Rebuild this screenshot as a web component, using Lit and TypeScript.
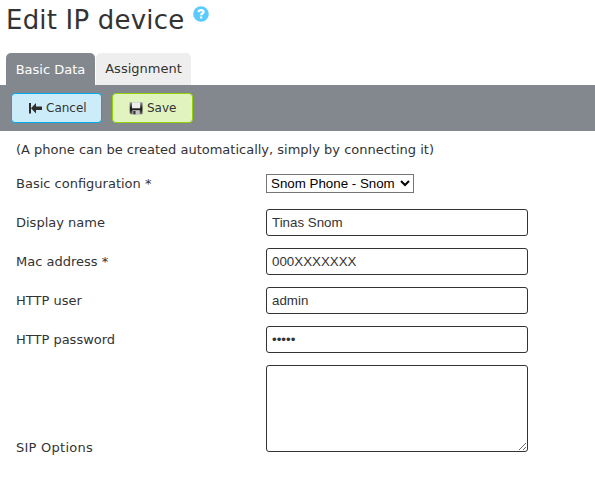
import { LitElement, html, css, svg } from "lit";
import { customElement } from "lit/decorators.js";

const helpIcon = svg`<svg class="help" viewBox="0 0 16 16"><circle cx="8" cy="8" r="7.8" fill="#5bcbff"/><path d="M5.6 6.1C5.7 4.7 6.6 4.1 8 4.1s2.5.7 2.5 1.9C10.5 7.5 8.1 7.4 8.1 9.2M8.1 10.4v2.2" fill="none" stroke="#fff" stroke-width="2.3"/></svg>`;

const backIcon = svg`<svg class="icon" viewBox="0 0 14 14"><path d="M1 2h2v10.5H1zM3 7.2L8 2v3.4h6v3.7H8v3.4z" fill="#2d2d2d"/></svg>`;

const saveIcon = svg`<svg class="icon" viewBox="0 0 14 14"><defs><linearGradient id="g" x1="0" y1="0" x2="0" y2="1"><stop offset="0" stop-color="#999"/><stop offset=".45" stop-color="#1c1c1c"/><stop offset=".65" stop-color="#222"/><stop offset="1" stop-color="#777"/></linearGradient></defs><path d="M.7 1.3h12.8v12H1.7l-1-1z" fill="url(#g)"/><path d="M3 1.3h8.2v6H3z" fill="#ececec"/><path d="M3.4 9.2h7.4v4.1H3.4z" fill="#c5c5c5"/><path d="M4.3 10h2.2v3.3H4.3z" fill="#333"/></svg>`;

@customElement("app-root")
export class AppRoot extends LitElement {
  static styles = css`
    :host {
      display: block;
      height: 480px;
      background: #fff;
      color: #333;
      font: 13px/16px "DejaVu Sans", Verdana, sans-serif;
      overflow: hidden;
    }
    * { box-sizing: border-box; }
    header { display: flex; height: 53px; padding: 3px 0 0 6px; gap: 9px; }
    h1 { margin: 0; padding-top: 1px; font-size: 26px; line-height: 32px; font-weight: 400; width: 178px; white-space: nowrap; letter-spacing: 0.2px; }
    .help { width: 16px; height: 16px; margin-top: 3px; flex: none; }
    .tabs { display: flex; gap: 1px; padding-left: 6px; height: 32px; }
    .tab { height: 32px; line-height: 32px; border-radius: 5px 5px 0 0; text-align: center; background: #eee; width: 95px; white-space: nowrap; }
    .tab.active { background: #83888e; color: #fff; width: 89px; padding-top: 1px; }
    .bar { display: flex; gap: 10px; background: #83888e; height: 46px; padding: 8px 0 0 11px; }
    .btn { display: flex; align-items: center; justify-content: flex-start; gap: 4px; height: 30px; padding: 0 0 0 16px; border: 1px solid #00a8f0; border-radius: 4px; background: #cdecfa; color: #333; font: inherit; font-size: 12px; width: 91px; white-space: nowrap; }
    .btn.save { border-color: #92d400; background: #e1f3bf; width: 81px; }
    .icon { width: 14px; height: 14px; flex: none; }
    .form { padding: 11px 0 0 16px; }
    .note { height: 22px; white-space: nowrap; }
    .row { display: grid; grid-template-columns: 250px 262px; align-items: center; height: 39px; }
    .row.tall { height: 99px; padding-top: 6px; align-items: start; }
    .row.tall .label { padding-top: 75px; letter-spacing: 0.25px; }
    select { width: 148px; height: 19px; margin: 0; font: 13.333px "Liberation Sans", Arial, sans-serif; color: #000; background: #fff; border: 1px solid #767676; border-radius: 0; padding: 0; }
    input, textarea { display: block; width: 262px; height: 27px; border: 1px solid #333; border-radius: 3px; padding: 0 5px; margin: 0; background: #fff; color: #333; font: 13.333px "Liberation Sans", Arial, sans-serif; }
    textarea { height: 87px; resize: both; }
  `;

  private row(label: string, value: string, type = "text") {
    return html`<label class="row"><span class="label">${label}</span><input type=${type} .value=${value} /></label>`;
  }

  render() {
    return html`
      <header><h1>Edit IP device</h1>${helpIcon}</header>
      <nav class="tabs">
        <div class="tab active">Basic Data</div>
        <div class="tab">Assignment</div>
      </nav>
      <div class="bar">
        <button class="btn">${backIcon}<span>Cancel</span></button>
        <button class="btn save">${saveIcon}<span>Save</span></button>
      </div>
      <div class="form">
        <div class="note">(A phone can be created automatically, simply by connecting it)</div>
        <label class="row"><span class="label">Basic configuration *</span><select><option>Snom Phone - Snom</option></select></label>
        ${this.row("Display name", "Tinas Snom")}
        ${this.row("Mac address *", "000XXXXXXX")}
        ${this.row("HTTP user", "admin")}
        ${this.row("HTTP password", "admin", "password")}
        <label class="row tall"><span class="label">SIP Options</span><textarea></textarea></label>
      </div>
    `;
  }
}
